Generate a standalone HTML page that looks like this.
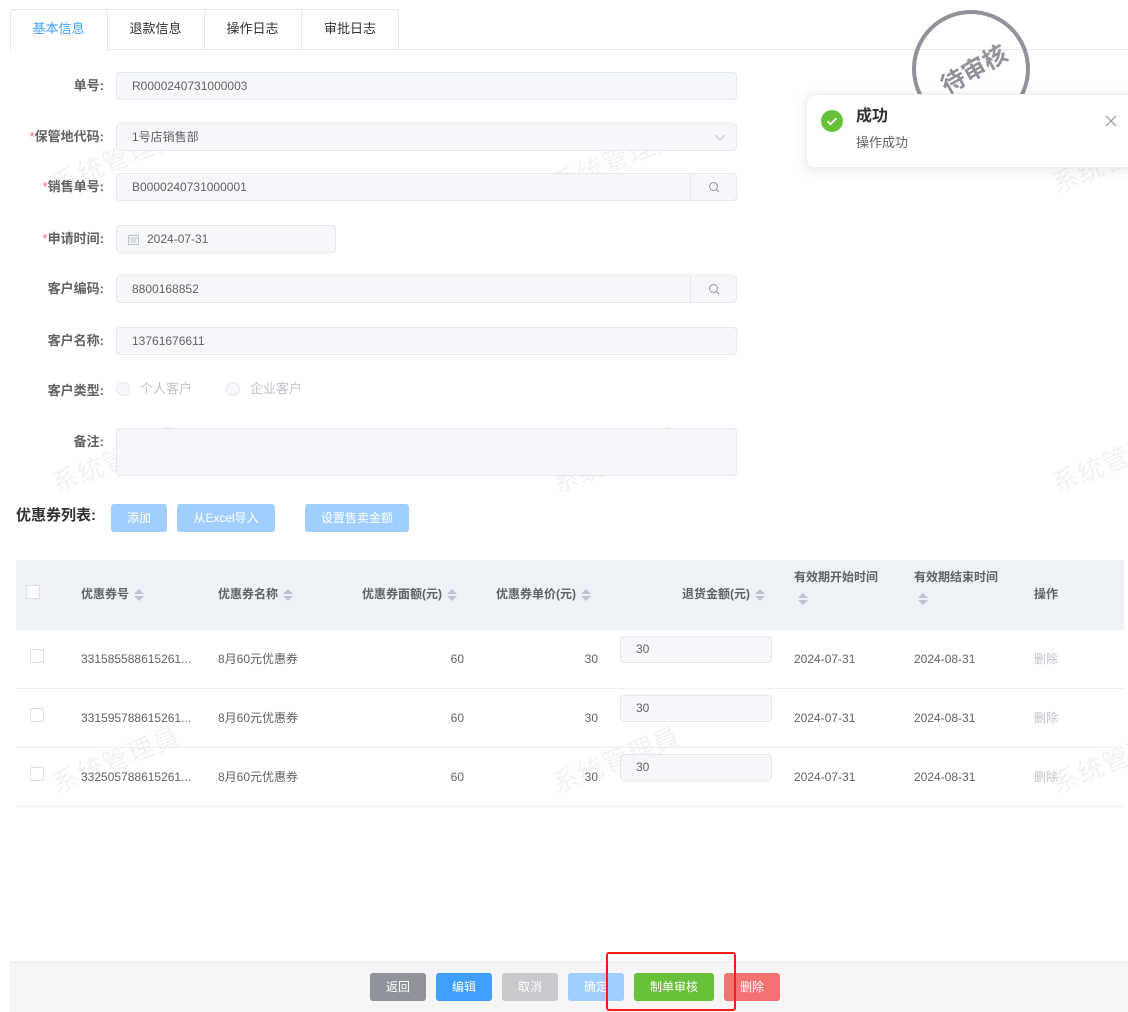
<!DOCTYPE html>
<html><head><meta charset="utf-8">
<style>
*{box-sizing:border-box;margin:0;padding:0}
body{width:1128px;height:1012px;position:relative;background:#fff;font-family:"Liberation Sans","Noto Sans CJK SC",sans-serif;font-size:12px;color:#606266;overflow:hidden}
.a{position:absolute}
.tab{position:absolute;top:10px;height:40px;line-height:38px;text-align:center;font-size:13px;color:#303133}
.lbl{position:absolute;width:104px;text-align:right;font-weight:bold;font-size:13px;color:#606266;line-height:16px}
.lbl i{color:#f56c6c;font-style:normal;font-weight:normal}
.inp{position:absolute;left:116px;height:28px;background:#f5f7fa;border:1px solid #e4e7ed;border-radius:4px;line-height:26px;padding-left:15px;color:#606266;font-size:12px}
.srch{position:absolute;right:0;top:0;width:46px;height:26px;border-left:1px solid #e4e7ed}
.btn{position:absolute;height:28px;line-height:28px;color:#fff;text-align:center;border-radius:3px;font-size:12px}
.wm{position:absolute;font-size:26px;color:rgba(0,0,0,0.05);transform:rotate(-22deg);white-space:nowrap;letter-spacing:1px}
.th{position:absolute;font-weight:bold;color:#606266;font-size:12px;line-height:14px}
.td{position:absolute;font-size:12px;color:#606266;line-height:14px}
.sort{display:inline-block;width:10px;height:14px;vertical-align:middle;margin-left:5px;position:relative}
.sort:before{content:"";position:absolute;left:0;top:1px;border:5px solid transparent;border-bottom-color:#c0c4cc;border-top:none}
.sort:after{content:"";position:absolute;left:0;top:8px;border:5px solid transparent;border-top-color:#c0c4cc;border-bottom:none}
.cb{position:absolute;width:14px;height:14px;border:1px solid #dcdfe6;border-radius:2px;background:#fff}
.rowline{position:absolute;left:16px;width:1108px;height:1px;background:#ebeef5}
.ri{position:absolute;left:620px;width:152px;height:27px;background:#f5f7fa;border:1px solid #e4e7ed;border-radius:4px;padding-left:15px;line-height:25px;color:#606266}
</style></head><body>

<div class="wm" style="left:48px;top:140px">系统管理員</div>
<div class="wm" style="left:548px;top:140px">系统管理員</div>
<div class="wm" style="left:1048px;top:140px">系统管理員</div>
<div class="wm" style="left:48px;top:440px">系统管理員</div>
<div class="wm" style="left:548px;top:440px">系统管理員</div>
<div class="wm" style="left:1048px;top:440px">系统管理員</div>
<div class="wm" style="left:48px;top:740px">系统管理員</div>
<div class="wm" style="left:548px;top:740px">系统管理員</div>
<div class="wm" style="left:1048px;top:740px">系统管理員</div>

<!-- tabs -->
<div class="a" style="left:10px;top:49px;width:1118px;height:1px;background:#e4e7ed"></div>
<div class="a" style="left:10px;top:9px;width:389px;height:41px;border:1px solid #e4e7ed;border-bottom:none;border-radius:4px 4px 0 0;background:#fff"></div>
<div class="a" style="left:107px;top:10px;width:1px;height:40px;background:#e4e7ed"></div>
<div class="a" style="left:204px;top:10px;width:1px;height:40px;background:#e4e7ed"></div>
<div class="a" style="left:301px;top:10px;width:1px;height:40px;background:#e4e7ed"></div>
<div class="a" style="left:108px;top:49px;width:291px;height:1px;background:#e4e7ed"></div>
<div class="a" style="left:11px;top:49px;width:96px;height:1px;background:#fff"></div>
<div class="tab" style="left:10px;width:97px;color:#409eff">基本信息</div>
<div class="tab" style="left:107px;width:97px">退款信息</div>
<div class="tab" style="left:204px;width:97px">操作日志</div>
<div class="tab" style="left:301px;width:98px">审批日志</div>

<!-- form -->
<div class="lbl" style="top:78px">单号:</div>
<div class="inp" style="top:72px;width:621px">R0000240731000003</div>

<div class="lbl" style="top:129px"><i>*</i>保管地代码:</div>
<div class="inp" style="top:123px;width:621px">1号店销售部
<svg class="a" style="right:10px;top:8px" width="12" height="10" viewBox="0 0 12 10"><path d="M1 3l5 5 5-5" fill="none" stroke="#c0c4cc" stroke-width="1.2"/></svg></div>

<div class="lbl" style="top:179px"><i>*</i>销售单号:</div>
<div class="inp" style="top:173px;width:621px">B0000240731000001<div class="srch"><svg class="a" style="left:17px;top:7px" width="12" height="12" viewBox="0 0 12 12"><circle cx="5.5" cy="5.5" r="4" fill="none" stroke="#909399" stroke-width="1"/><path d="M8.5 8.5l2.5 2.5" stroke="#909399"/></svg></div></div>

<div class="lbl" style="top:231px"><i>*</i>申请时间:</div>
<div class="inp" style="top:225px;width:220px;padding-left:30px">2024-07-31
<svg class="a" style="left:11px;top:8px" width="11" height="11" viewBox="0 0 11 11"><rect x="0.5" y="1.5" width="10" height="9" fill="none" stroke="#c0c4cc"/><path d="M0.5 4h10M3 0v2M8 0v2M2.5 6h6M2.5 8h6" stroke="#c0c4cc"/></svg></div>

<div class="lbl" style="top:281px">客户编码:</div>
<div class="inp" style="top:275px;width:621px">8800168852<div class="srch"><svg class="a" style="left:17px;top:7px" width="12" height="12" viewBox="0 0 12 12"><circle cx="5.5" cy="5.5" r="4" fill="none" stroke="#909399" stroke-width="1"/><path d="M8.5 8.5l2.5 2.5" stroke="#909399"/></svg></div></div>

<div class="lbl" style="top:333px">客户名称:</div>
<div class="inp" style="top:327px;width:621px">13761676611</div>

<div class="lbl" style="top:383px">客户类型:</div>
<div class="a" style="left:116px;top:382px;width:14px;height:14px;border:1px solid #e4e7ed;border-radius:50%;background:#f5f7fa"></div>
<div class="a" style="left:140px;top:381px;color:#c0c4cc;font-size:13px;line-height:16px">个人客户</div>
<div class="a" style="left:226px;top:382px;width:14px;height:14px;border:1px solid #e4e7ed;border-radius:50%;background:#f5f7fa"></div>
<div class="a" style="left:250px;top:381px;color:#c0c4cc;font-size:13px;line-height:16px">企业客户</div>

<div class="lbl" style="top:434px">备注:</div>
<div class="inp" style="top:428px;width:621px;height:48px"></div>

<!-- coupons -->
<div class="a" style="left:16px;top:507px;font-size:15px;font-weight:bold;color:#303133;line-height:18px">优惠券列表:</div>
<div class="btn" style="left:111px;top:504px;width:56px;background:#a0cfff">添加</div>
<div class="btn" style="left:177px;top:504px;width:98px;background:#a0cfff">从Excel导入</div>
<div class="btn" style="left:305px;top:504px;width:104px;background:#a0cfff">设置售卖金额</div>

<div class="a" style="left:16px;top:560px;width:1108px;height:69px;background:#eef1f6"></div>
<div class="cb" style="left:26px;top:585px"></div>
<div class="th" style="left:81px;top:587px">优惠券号<span class="sort"></span></div>
<div class="th" style="left:218px;top:587px">优惠券名称<span class="sort"></span></div>
<div class="th" style="left:362px;top:587px">优惠券面额(元)<span class="sort"></span></div>
<div class="th" style="left:496px;top:587px">优惠券单价(元)<span class="sort"></span></div>
<div class="th" style="left:682px;top:587px">退货金额(元)<span class="sort"></span></div>
<div class="th" style="left:794px;top:570px">有效期开始时间<br><span class="sort" style="margin:8px 0 0 4px"></span></div>
<div class="th" style="left:914px;top:570px">有效期结束时间<br><span class="sort" style="margin:8px 0 0 4px"></span></div>
<div class="th" style="left:1034px;top:587px">操作</div>
<div class="rowline" style="top:629px"></div>

<div class="cb" style="left:30px;top:649px"></div>
<div class="td" style="left:81px;top:652px">331585588615261...</div>
<div class="td" style="left:218px;top:652px">8月60元优惠券</div>
<div class="td" style="left:440px;top:652px;width:24px;text-align:right">60</div>
<div class="td" style="left:574px;top:652px;width:24px;text-align:right">30</div>
<div class="ri" style="top:636px">30</div>
<div class="td" style="left:794px;top:652px">2024-07-31</div>
<div class="td" style="left:914px;top:652px">2024-08-31</div>
<div class="td" style="left:1034px;top:652px;color:#c0c4cc">删除</div>
<div class="rowline" style="top:688px"></div>

<div class="cb" style="left:30px;top:708px"></div>
<div class="td" style="left:81px;top:711px">331595788615261...</div>
<div class="td" style="left:218px;top:711px">8月60元优惠券</div>
<div class="td" style="left:440px;top:711px;width:24px;text-align:right">60</div>
<div class="td" style="left:574px;top:711px;width:24px;text-align:right">30</div>
<div class="ri" style="top:695px">30</div>
<div class="td" style="left:794px;top:711px">2024-07-31</div>
<div class="td" style="left:914px;top:711px">2024-08-31</div>
<div class="td" style="left:1034px;top:711px;color:#c0c4cc">删除</div>
<div class="rowline" style="top:747px"></div>

<div class="cb" style="left:30px;top:767px"></div>
<div class="td" style="left:81px;top:770px">332505788615261...</div>
<div class="td" style="left:218px;top:770px">8月60元优惠券</div>
<div class="td" style="left:440px;top:770px;width:24px;text-align:right">60</div>
<div class="td" style="left:574px;top:770px;width:24px;text-align:right">30</div>
<div class="ri" style="top:754px">30</div>
<div class="td" style="left:794px;top:770px">2024-07-31</div>
<div class="td" style="left:914px;top:770px">2024-08-31</div>
<div class="td" style="left:1034px;top:770px;color:#c0c4cc">删除</div>
<div class="rowline" style="top:806px"></div>

<!-- footer -->
<div class="a" style="left:10px;top:962px;width:1118px;height:50px;background:#f5f5f5;border-top:1px solid #e8e8e8"></div>
<div class="btn" style="left:370px;top:973px;width:56px;background:#909399">返回</div>
<div class="btn" style="left:436px;top:973px;width:56px;background:#409eff">编辑</div>
<div class="btn" style="left:502px;top:973px;width:56px;background:#c8c9cc">取消</div>
<div class="btn" style="left:568px;top:973px;width:56px;background:#a0cfff">确定</div>
<div class="btn" style="left:634px;top:973px;width:80px;background:#67c23a">制单审核</div>
<div class="btn" style="left:724px;top:973px;width:56px;background:#f56c6c;opacity:0.95">删除</div>
<div class="a" style="left:606px;top:952px;width:130px;height:59px;border:2px solid #ff1a1a;border-radius:3px"></div>

<!-- stamp -->
<div class="a" style="left:912px;top:10px;width:118px;height:118px;border:4px solid #909399;border-radius:50%"></div>
<div class="a" style="left:928px;top:50px;width:90px;text-align:center;font-size:24px;font-weight:bold;color:#909399;transform:rotate(-30deg)">待审核</div>

<!-- notification -->
<div class="a" style="left:806px;top:94px;width:340px;height:74px;background:#fff;border:1px solid #ebeef5;border-radius:8px;box-shadow:0 2px 12px rgba(0,0,0,0.1)">
<svg class="a" style="left:14px;top:15px" width="22" height="22" viewBox="0 0 22 22"><circle cx="11" cy="11" r="11" fill="#67c23a"/><path d="M6.5 11.2l3 3 6-6" fill="none" stroke="#fff" stroke-width="1.8"/></svg>
<div class="a" style="left:49px;top:12px;font-size:16px;font-weight:bold;color:#303133;line-height:20px">成功</div>
<div class="a" style="left:49px;top:40px;font-size:13px;color:#606266;line-height:16px">操作成功</div>
<svg class="a" style="left:298px;top:20px" width="12" height="12" viewBox="0 0 12 12"><path d="M1 1l10 10M11 1L1 11" stroke="#909399" stroke-width="1.2"/></svg>
</div>

</body></html>
